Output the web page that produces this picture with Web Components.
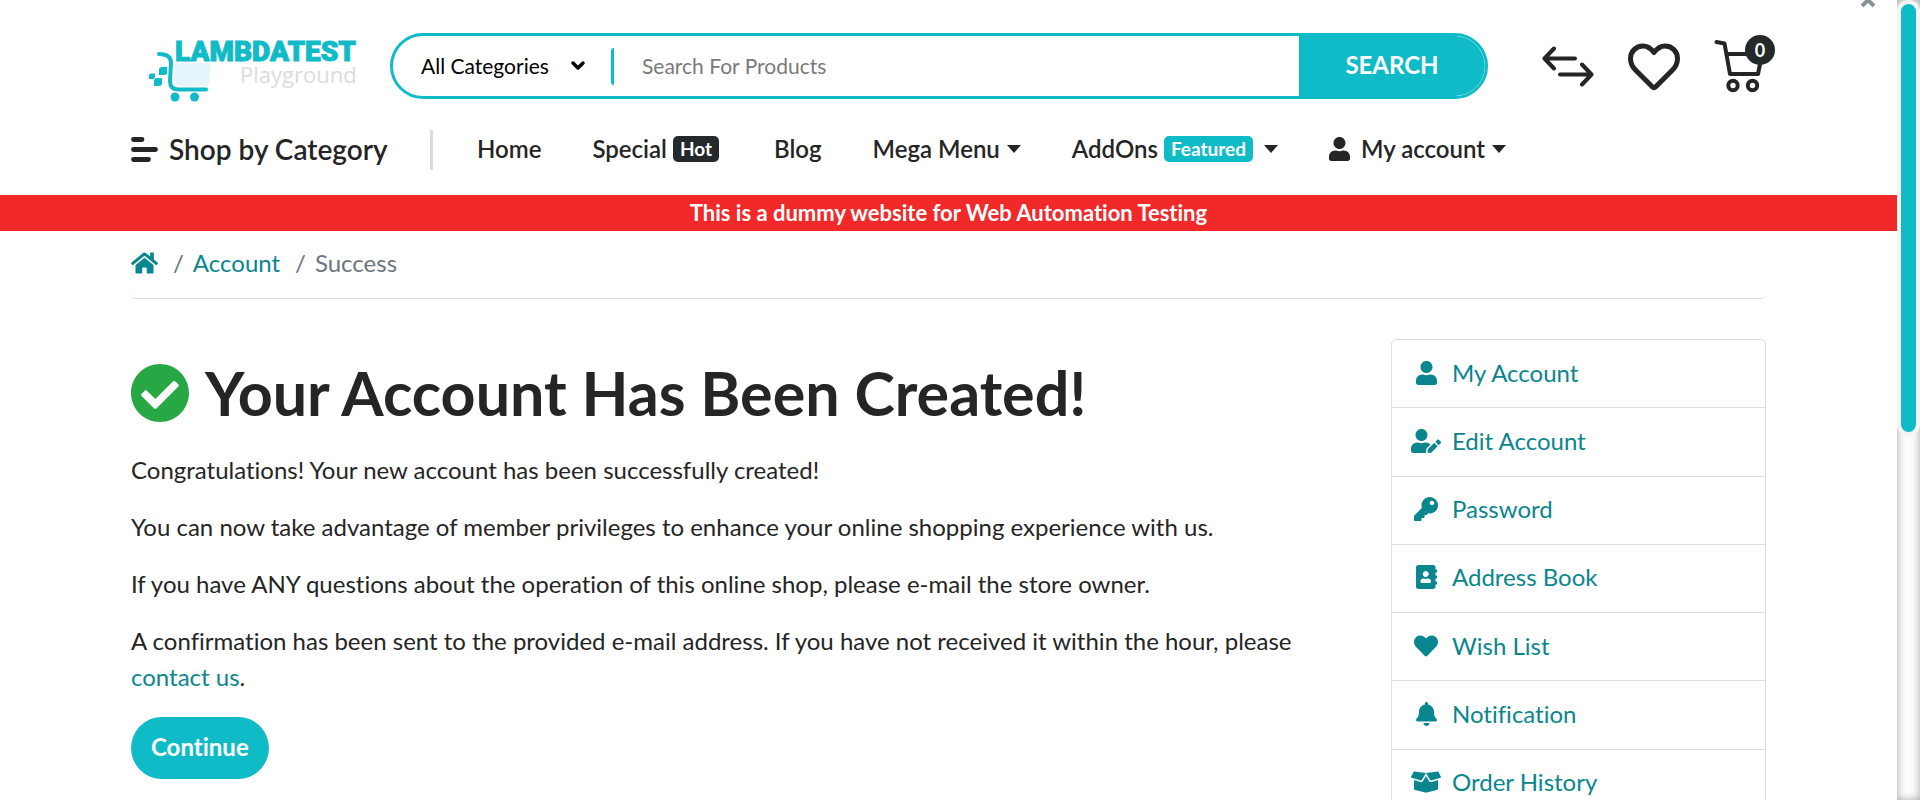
<!DOCTYPE html>
<html lang="en">
<head>
<meta charset="utf-8">
<title>Your Account Has Been Created!</title>
<style>
  :root { --brand: #10bbc8; --link: #0a868e; --ink: #252525; --line: #dedede; --side: 131px; }
  html, body { margin: 0; height: 100%; overflow: hidden; }
  body { font: 24px/36px Lato, "Open Sans", sans-serif; font-variant-ligatures: no-common-ligatures; color: var(--ink); background: #fff; }
</style>
</head>
<body>
<shop-page></shop-page>

<script>
const ICONS = {
  user: ['0 0 448 512', 'M224 256c70.7 0 128-57.3 128-128S294.7 0 224 0 96 57.3 96 128s57.3 128 128 128zm89.6 32h-16.7c-22.2 10.2-46.9 16-72.9 16s-50.6-5.8-72.9-16h-16.7C60.2 288 0 348.2 0 422.4V464c0 26.5 21.5 48 48 48h352c26.5 0 48-21.5 48-48v-41.6c0-74.2-60.2-134.4-134.4-134.4z'],
  edit: ['0 0 640 512', 'M224 256c70.7 0 128-57.3 128-128S294.7 0 224 0 96 57.3 96 128s57.3 128 128 128zm89.6 32h-16.7c-22.2 10.2-46.9 16-72.9 16s-50.6-5.8-72.9-16h-16.7C60.2 288 0 348.2 0 422.4V464c0 26.5 21.5 48 48 48h274.9c-2.4-6.8-3.4-14-2.6-21.3l6.8-60.9 1.2-11.1 7.9-7.9 77.3-77.3c-24.5-27.7-60-45.5-99.9-45.5zm45.3 145.3l-6.8 61c-1.1 10.2 7.5 18.8 17.6 17.6l60.9-6.8 137.9-137.9-71.7-71.7-137.9 137.8zM633 268.9L595.1 231c-9.3-9.3-24.5-9.3-33.8 0l-37.8 37.8-4.1 4.1 71.8 71.7 41.8-41.8c9.3-9.4 9.3-24.5 0-33.9z'],
  key: ['0 0 512 512', 'M512 176.001C512 273.203 433.202 352 336 352c-11.22 0-22.19-1.062-32.827-3.069l-24.012 27.014A23.999 23.999 0 0 1 261.223 384H224v40c0 13.255-10.745 24-24 24h-40v40c0 13.255-10.745 24-24 24H24c-13.255 0-24-10.745-24-24v-78.059c0-6.365 2.529-12.47 7.029-16.971l161.802-161.802C163.108 213.814 160 195.271 160 176 160 78.798 238.797.001 335.999 0 433.488-.001 512 78.511 512 176.001zM336 128c0 26.51 21.49 48 48 48s48-21.49 48-48-21.49-48-48-48-48 21.49-48 48z'],
  book: ['0 0 448 512', 'M436 160c6.6 0 12-5.4 12-12v-40c0-6.6-5.4-12-12-12h-20V48c0-26.5-21.5-48-48-48H48C21.5 0 0 21.5 0 48v416c0 26.5 21.5 48 48 48h320c26.5 0 48-21.5 48-48v-48h20c6.6 0 12-5.4 12-12v-40c0-6.6-5.4-12-12-12h-20v-64h20c6.6 0 12-5.4 12-12v-40c0-6.6-5.4-12-12-12h-20v-64h20zm-228-32c35.3 0 64 28.7 64 64s-28.7 64-64 64-64-28.7-64-64 28.7-64 64-64zm112 236.8c0 10.6-10 19.2-22.4 19.2H118.4C106 384 96 375.4 96 364.8v-19.2c0-31.8 30.1-57.6 67.2-57.6h5c12.3 5.1 25.7 8 39.8 8s27.6-2.9 39.8-8h5c37.1 0 67.2 25.8 67.2 57.6v19.2z'],
  heart: ['0 0 512 512', 'M462.3 62.6C407.5 15.9 326 24.3 275.7 76.2L256 96.5l-19.7-20.3C186.1 24.3 104.5 15.9 49.7 62.6c-62.8 53.6-66.1 149.8-9.9 207.9l193.5 199.8c12.5 12.9 32.8 12.9 45.3 0l193.5-199.8c56.3-58.1 53-154.3-9.8-207.9z'],
  bell: ['0 0 448 512', 'M224 512c35.32 0 63.97-28.65 63.97-64H160.03c0 35.35 28.65 64 63.97 64zm215.39-149.71c-19.32-20.76-55.47-51.99-55.47-154.29 0-77.7-54.48-139.9-127.94-155.16V32c0-17.67-14.32-32-31.98-32s-31.98 14.33-31.98 32v20.84C118.56 68.1 64.08 130.3 64.08 208c0 102.3-36.15 133.53-55.47 154.29-6 6.45-8.66 14.16-8.61 21.71.11 16.4 12.98 32 32.1 32h383.8c19.12 0 32-15.6 32.1-32 .05-7.55-2.61-15.27-8.61-21.71z'],
  box: ['0 0 640 512', 'M425.7 256c-16.9 0-32.8-9-41.4-23.4L320 126l-64.2 106.6c-8.7 14.5-24.6 23.5-41.5 23.5-4.5 0-9-.6-13.3-1.9L64 215v178c0 14.7 10 27.5 24.2 31l216.2 54.1c10.2 2.5 20.9 2.5 31 0L551.8 424c14.2-3.6 24.2-16.4 24.2-31V215l-137 39.1c-4.3 1.3-8.8 1.9-13.3 1.9zm212.6-112.2L586.8 41c-3.1-6.2-9.8-9.8-16.7-8.9L320 64l91.7 152.1c3.8 6.3 11.4 9.3 18.5 7.3l197.9-56.5c9.9-2.9 14.7-13.9 10.2-23.1zM53.2 41L1.7 143.8c-4.6 9.2.3 20.2 10.1 23l197.9 56.5c7.1 2 14.7-1 18.5-7.3L320 64 69.8 32.1c-6.9-.8-13.5 2.7-16.6 8.9z'],
  check: ['8 8 496 496', 'M504 256c0 136.967-111.033 248-248 248S8 392.967 8 256 119.033 8 256 8s248 111.033 248 248zM227.314 387.314l184-184c6.248-6.248 6.248-16.379 0-22.627l-22.627-22.627c-6.248-6.249-16.379-6.249-22.628 0L216 308.118l-70.059-70.059c-6.248-6.248-16.379-6.248-22.628 0l-22.627 22.627c-6.248 6.248-6.248 16.379 0 22.627l104 104c6.249 6.249 16.379 6.249 22.628.001z'],
  home: ['0 0 576 512', 'M280.37 148.26L96 300.11V464a16 16 0 0 0 16 16l112.06-.29a16 16 0 0 0 15.92-16V368a16 16 0 0 1 16-16h64a16 16 0 0 1 16 16v95.64a16 16 0 0 0 16 16.05L464 480a16 16 0 0 0 16-16V300L295.67 148.26a12.19 12.19 0 0 0-15.3 0zM571.6 251.47L488 182.56V44.05a12 12 0 0 0-12-12h-56a12 12 0 0 0-12 12v72.61L318.47 43a48 48 0 0 0-61 0L4.34 251.47a12 12 0 0 0-1.6 16.9l25.5 31A12 12 0 0 0 45.15 301l235.22-193.74a12.19 12.19 0 0 1 15.3 0L530.9 301a12 12 0 0 0 16.9-1.6l25.5-31a12 12 0 0 0-1.7-16.93z'],
  caret: ['0 0 14 8', 'M0 0h14L7 8z']
};

function element(name, html) {
  const template = document.createElement('template');
  template.innerHTML = html;
  customElements.define(name, class extends HTMLElement {
    constructor() {
      super();
      this.attachShadow({ mode: 'open' }).append(template.content.cloneNode(true));
    }
  });
}

/* Solid glyph; its height is set by --size */
customElements.define('shop-icon', class extends HTMLElement {
  connectedCallback() {
    if (this.shadowRoot) return;
    const [box, path] = ICONS[this.getAttribute('name')];
    this.attachShadow({ mode: 'open' }).innerHTML = `
      <style>:host{display:inline-flex;flex:none;justify-content:center}svg{display:block;height:var(--size,24px);fill:currentColor}</style>
      <svg viewBox="${box}" aria-hidden="true"><path d="${path}"/></svg>`;
  }
});

element('shop-logo', `
  <style>
    :host { display: block; }
    a, svg { display: block; }
    .name { font: 900 28px Roboto, sans-serif; fill: var(--brand); stroke: var(--brand); stroke-width: 1px; }
    .sub { font: 400 22px "Open Sans", sans-serif; fill: #dcdcdc; }
  </style>
  <a href="#" aria-label="Lambdatest Playground">
    <svg width="230" height="80" viewBox="0 0 230 80">
      <path d="M35 33H69q3 0 2 3L69 52q-.6 3.500-4 3.500H37q-3 0-3-3z" fill="#e6f4fc"/>
      <path d="M19 24q12 0 12 9L30 51q0 8.500 8 8.500H66" fill="none" stroke="#10bbc8" stroke-width="4" stroke-linecap="round"/>
      <g fill="#10bbc8">
        <circle cx="35" cy="67" r="4.500"/><circle cx="54.500" cy="67" r="4.500"/>
        <path d="M11 43.500h4V47q0 2-2 2H9v-3.500q0-2 2-2zM22 37h5v5.500q0 2.500-2.500 2.500H19v-5q0-3 3-3zM17 48h5v5q0 3-3 3h-5v-5q0-3 3-3z"/>
      </g>
      <text class="name" x="35" y="31">LAMBDATEST</text>
      <text class="sub" x="100" y="53">Playground</text>
    </svg>
  </a>`);

element('shop-search', `
  <style>
    :host { display: block; }
    form { display: flex; height: 60px; margin: 0; border: 3px solid var(--brand); border-radius: 33px; overflow: hidden; background: #fff; }
    .pick { flex: none; width: 218px; display: grid; align-items: center; }
    select, .pick svg { grid-area: 1 / 1; }
    select { appearance: none; width: 100%; height: 60px; padding: 0 0 2px 28px; border: 0; background: none; color: #000; font: 21px Lato, sans-serif; }
    .pick svg { justify-self: end; margin-right: 25px; pointer-events: none; }
    .rule { flex: none; align-self: center; width: 3px; height: 37px; background: var(--brand); border-radius: 3px 0 0 3px; }
    input { flex: 1; min-width: 0; border: 0; outline: 0; padding: 0 28px 2px; font: 21px Lato, sans-serif; color: #000; }
    input::placeholder { color: #7a7a7a; opacity: 1; }
    button { flex: none; width: 186px; border: 0; border-radius: 0 30px 30px 0; padding: 0 0 4px; background: var(--brand); color: #fff; font: 700 24px Lato, sans-serif; }
  </style>
  <form role="search">
    <div class="pick">
      <select aria-label="Category"><option>All Categories</option></select>
      <svg width="16" height="12" viewBox="0 0 16 12"><path d="M3 3l5 5 5-5" fill="none" stroke="#000" stroke-width="3.500" stroke-linecap="round" stroke-linejoin="round"/></svg>
    </div>
    <span class="rule"></span>
    <input type="text" placeholder="Search For Products" aria-label="Search For Products">
    <button type="button">SEARCH</button>
  </form>`);

element('shop-actions', `
  <style>
    :host { display: flex; align-items: center; justify-content: flex-end; gap: 34px; }
    a { display: block; position: relative; color: var(--ink); }
    svg { display: block; fill: none; stroke: currentColor; stroke-linecap: round; stroke-linejoin: round; }
    .count { position: absolute; top: -3px; right: -9px; width: 30px; height: 30px; border-radius: 50%; background: #24292b; color: #fff; font: 700 18px/30px Lato, sans-serif; text-align: center; }
  </style>
  <a href="#" aria-label="Compare"><svg width="52" height="56" viewBox="0 0 52 56" stroke-width="4"><path d="M33 20.500H2.500M12 10.500L2.500 20.500l9.500 10M18 36.500h31.500M40 26.500l9.500 10-9.500 10"/></svg></a>
  <a href="#" aria-label="Wish list"><svg width="52" height="56" viewBox="0 0 52 56" stroke-width="5"><path d="M26 14.500C22.500 10 19 8 15 8 8 8 2.500 13.500 2.500 20.500c0 5 1.500 8 5 11.500L24.500 49q1.500 1.500 3 0L44.500 32C48 28.500 49.500 25.500 49.500 20.500c0-7-5.500-12.500-12.500-12.500-4 0-7.500 2-11 6.500z"/></svg></a>
  <a href="#" aria-label="Cart"><svg width="52" height="56" viewBox="0 0 52 56" stroke-width="4"><path d="M2.500 4l8 1.500L16 36h28L48 16H12.500"/><circle cx="19" cy="47.500" r="4.700"/><circle cx="38.500" cy="47.500" r="4.700"/></svg><span class="count">0</span></a>`);

element('shop-nav', `
  <style>
    :host { display: flex; align-items: center; height: 40px; padding: 31px 0 25px; font-weight: 600; line-height: 36px; white-space: nowrap; }
    a { display: flex; align-items: center; padding-bottom: 2px; color: var(--ink); text-decoration: none; }
    .all { gap: 11px; font-size: 28px; width: 299px; box-sizing: border-box; }
    nav { display: flex; align-items: center; gap: 51px; height: 40px; padding-left: 44px; border-left: 3px solid #dcdcdc; }
    .badge { margin: 0 4px 0 6px; padding: 0 7px; border-radius: 5px; font-size: 19px; font-weight: 700; line-height: 26px; color: #fff; background: #24292b; }
    .new { background: var(--brand); }
    .caret { --size: 8px; margin-left: 7px; }
    .user { margin-right: 11px; }
  </style>
  <a class="all" href="#">
    <svg width="27" height="26" viewBox="0 0 27 26" stroke="currentColor" stroke-width="4.800" stroke-linecap="round"><path d="M2.500 3.500h8.500M2.500 13.500h22M2.500 23.500h15"/></svg>
    Shop by Category
  </a>
  <nav>
    <a href="#">Home</a>
    <a href="#">Special<span class="badge">Hot</span></a>
    <a href="#">Blog</a>
    <a href="#">Mega Menu<shop-icon class="caret" name="caret"></shop-icon></a>
    <a href="#">AddOns<span class="badge new">Featured</span><shop-icon class="caret" name="caret"></shop-icon></a>
    <a href="#"><shop-icon class="user" name="user"></shop-icon>My account<shop-icon class="caret" name="caret"></shop-icon></a>
  </nav>`);

element('shop-banner', `
  <style>:host { display: block; background: #f22929; color: #fff; font-size: 22px; font-weight: 700; text-align: center; }</style>
  <slot></slot>`);

element('shop-breadcrumb', `
  <style>
    :host { display: block; }
    ol { display: flex; align-items: center; margin: 0; padding: 14px 0 17px; list-style: none; border-bottom: 1px solid var(--line); border-radius: 5px; color: #6c757d; }
    li { display: flex; align-items: center; }
    li + li::before { content: "/"; padding: 0 9px 0 15px; }
    a { display: flex; color: var(--link); text-decoration: none; }
  </style>
  <nav aria-label="Breadcrumb"><ol>
    <li><a href="#" aria-label="Home"><shop-icon name="home"></shop-icon></a></li>
    <li><a href="#">Account</a></li>
    <li>Success</li>
  </ol></nav>`);

element('shop-success', `
  <style>
    :host { display: block; padding-top: 18px; }
    h1 { display: flex; align-items: center; gap: 16px; margin: 0 0 23px; font-size: 61px; line-height: 72px; font-weight: 700; }
    h1 shop-icon { --size: 58px; color: #28a745; }
    p { margin: 0 0 21px; }
    p a { color: var(--link); text-decoration: none; }
    .go { display: inline-block; margin-top: 1px; padding: 12px 20px 14px; border-radius: 31px; background: var(--brand); color: #fff; font-weight: 700; text-decoration: none; }
  </style>
  <h1><shop-icon name="check"></shop-icon>Your Account Has Been Created!</h1>
  <p>Congratulations! Your new account has been successfully created!</p>
  <p>You can now take advantage of member privileges to enhance your online shopping experience with us.</p>
  <p>If you have ANY questions about the operation of this online shop, please e-mail the store owner.</p>
  <p>A confirmation has been sent to the provided e-mail address. If you have not received it within the hour, please <a href="#">contact us</a>.</p>
  <a class="go" href="#">Continue</a>`);

element('account-item', `
  <style>
    :host { display: flex; border-bottom: 1px solid var(--line); }
    a { flex: 1; display: flex; align-items: center; gap: 11px; padding: 0 19px 2px; color: var(--link); text-decoration: none; }
    .glyph { flex: none; display: flex; justify-content: center; width: 30px; }
  </style>
  <a href="#"><span class="glyph"><slot name="icon"></slot></span><slot></slot></a>`);

element('account-menu', `
  <style>
    :host { display: grid; grid-auto-rows: 1fr; height: 478px; border: 1px solid var(--line); border-radius: 5px; }
  </style>
  <slot></slot>`);

element('page-scrollbar', `
  <style>
    :host { display: block; background: #fcfcfc; box-shadow: inset 0 0 8px rgba(0,0,0,.35); }
    div { box-sizing: border-box; height: 436px; max-height: 100%; border: 4px solid #f5f5f5; border-radius: 12px; background: var(--brand); }
  </style>
  <div></div>`);

element('shop-page', `
  <style>
    :host { display: grid; grid-template-columns: 1fr 23px; height: 100vh; overflow: hidden; }
    .view { position: relative; min-width: 0; overflow: hidden; }
    header, .body { padding: 0 var(--side); }
    header { padding-top: 33px; }
    .top { display: grid; grid-template-columns: 259px 1fr 278px; align-items: center; }
    shop-logo { padding-left: 9px; height: 66px; margin-top: -6px; }
    .columns { display: grid; grid-template-columns: 1fr 375px; gap: 60px; margin-top: 40px; align-items: start; }
    .close { position: absolute; top: 0; right: 21px; padding: 0; border: 0; background: none; color: #869495; }
    .close svg { display: block; }
  </style>
  <div class="view">
    <button class="close" type="button" aria-label="Scroll up"><svg width="16" height="8" viewBox="0 0 16 8"><path d="M2 6l6-6 6 6" fill="none" stroke="currentColor" stroke-width="4"/></svg></button>
    <header>
      <div class="top"><shop-logo></shop-logo><shop-search></shop-search><shop-actions></shop-actions></div>
      <shop-nav></shop-nav>
    </header>
    <shop-banner>This is a dummy website for Web Automation Testing</shop-banner>
    <div class="body">
      <shop-breadcrumb></shop-breadcrumb>
      <div class="columns">
        <shop-success></shop-success>
        <account-menu>
          <account-item><shop-icon slot="icon" name="user"></shop-icon>My Account</account-item>
          <account-item><shop-icon slot="icon" name="edit"></shop-icon>Edit Account</account-item>
          <account-item><shop-icon slot="icon" name="key"></shop-icon>Password</account-item>
          <account-item><shop-icon slot="icon" name="book"></shop-icon>Address Book</account-item>
          <account-item><shop-icon slot="icon" name="heart"></shop-icon>Wish List</account-item>
          <account-item><shop-icon slot="icon" name="bell"></shop-icon>Notification</account-item>
          <account-item><shop-icon slot="icon" name="box"></shop-icon>Order History</account-item>
        </account-menu>
      </div>
    </div>
  </div>
  <page-scrollbar></page-scrollbar>`);
</script>
</body>
</html>
